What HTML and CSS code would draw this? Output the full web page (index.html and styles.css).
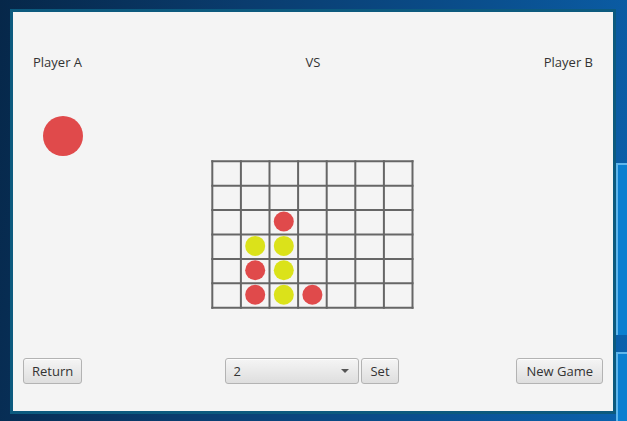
FILE: index.html
```html
<!DOCTYPE html>
<html lang="en">
<head>
<meta charset="utf-8">
<title>Connect Four</title>
<link rel="stylesheet" href="styles.css">
</head>
<body>
<div class="wall-panel panel-top"></div>
<div class="wall-panel panel-bottom"></div>
<div class="desktop">
  <div class="window">
    <header class="players">
      <span class="player-a">Player A</span>
      <span class="vs">VS</span>
      <span class="player-b">Player B</span>
    </header>
    <div class="turn-disc"></div>
    <svg class="board" width="204" height="150" viewBox="0 0 204 150" xmlns="http://www.w3.org/2000/svg">
      <g class="lines" stroke="#666666" stroke-width="2" fill="none">
        <path d="M1.3 0.3V148.7M29.9 0.3V148.7M58.5 0.3V148.7M87.1 0.3V148.7M115.7 0.3V148.7M144.3 0.3V148.7M172.9 0.3V148.7M201.5 0.3V148.7"/>
        <path d="M0.3 1.3H202.5M0.3 25.7H202.5M0.3 50.1H202.5M0.3 74.5H202.5M0.3 98.9H202.5M0.3 123.3H202.5M0.3 147.7H202.5"/>
      </g>
      <g class="red" fill="#e04a4b">
        <circle cx="72.8" cy="61.5" r="10"/>
        <circle cx="44.2" cy="110.3" r="10"/>
        <circle cx="44.2" cy="134.7" r="10"/>
        <circle cx="101.4" cy="134.7" r="10"/>
      </g>
      <g class="yellow" fill="#dbe21a">
        <circle cx="44.2" cy="85.9" r="10"/>
        <circle cx="72.8" cy="85.9" r="10"/>
        <circle cx="72.8" cy="110.3" r="10"/>
        <circle cx="72.8" cy="134.7" r="10"/>
      </g>
    </svg>
    <footer class="controls">
      <button class="btn btn-return" type="button">Return</button>
      <div class="size-group">
        <div class="combo"><span class="combo-value">2</span><span class="combo-arrow"></span></div>
        <button class="btn btn-set" type="button">Set</button>
      </div>
      <button class="btn btn-new" type="button">New Game</button>
    </footer>
  </div>
</div>
</body>
</html>
```
FILE: styles.css
```css
* {
  box-sizing: border-box;
}

html,
body {
  margin: 0;
  padding: 0;
}

body {
  position: relative;
  width: 627px;
  height: 421px;
  overflow: hidden;
  font-family: "Open Sans", "Liberation Sans", sans-serif;
  background: linear-gradient(100deg, #062749 0%, #0a3c6e 35%, #0a4f8e 70%, #0b62ae 100%);
}

.wall-panel {
  position: absolute;
  left: 616px;
  width: 30px;
  background: #0b7fd0;
  border-left: 2px solid #5fb6ec;
  border-top: 2px solid #5fb6ec;
}

.panel-top {
  top: 163px;
  height: 172px;
}

.panel-bottom {
  top: 352px;
  height: 80px;
}

.desktop {
  padding: 9px 0 0 10px;
}

.window {
  width: 606px;
  height: 405px;
  border: 3px solid #0c5a7e;
  background: #f4f4f4;
  display: flex;
  flex-direction: column;
  color: #333333;
  font-size: 13px;
}

.players {
  display: grid;
  grid-template-columns: 1fr auto 1fr;
  padding: 41px 20px 0;
  line-height: 18px;
}

.player-a {
  justify-self: start;
}

.player-b {
  justify-self: end;
}

.turn-disc {
  width: 40px;
  height: 40px;
  margin: 45px 0 0 30px;
  border-radius: 50%;
  background: #e04a4b;
}

.board {
  display: block;
  margin: 4px auto 0;
}

.controls {
  margin-top: auto;
  padding: 0 10px 27px;
  display: grid;
  grid-template-columns: 1fr auto 1fr;
  align-items: center;
}

.btn-return {
  justify-self: start;
}

.btn-new {
  justify-self: end;
}

.size-group {
  display: flex;
  gap: 2px;
  margin-right: 2px;
}

.btn,
.combo {
  height: 26px;
  border: 1px solid #b3b3b3;
  border-radius: 3px;
  background: linear-gradient(#f5f5f5, #dedede);
  box-shadow: inset 0 1px 0 rgba(255, 255, 255, 0.7);
  color: #333333;
  font-family: "Open Sans", "Liberation Sans", sans-serif;
  font-size: 13px;
  line-height: 18px;
}

.btn {
  padding: 0 8px;
  margin: 0;
}

.btn-new {
  padding: 0 9px;
}

.combo {
  width: 134px;
  display: flex;
  align-items: center;
  justify-content: space-between;
  padding: 0 9px 0 7px;
}

.combo-arrow {
  width: 0;
  height: 0;
  border-left: 4px solid transparent;
  border-right: 4px solid transparent;
  border-top: 4px solid #555555;
}
```
